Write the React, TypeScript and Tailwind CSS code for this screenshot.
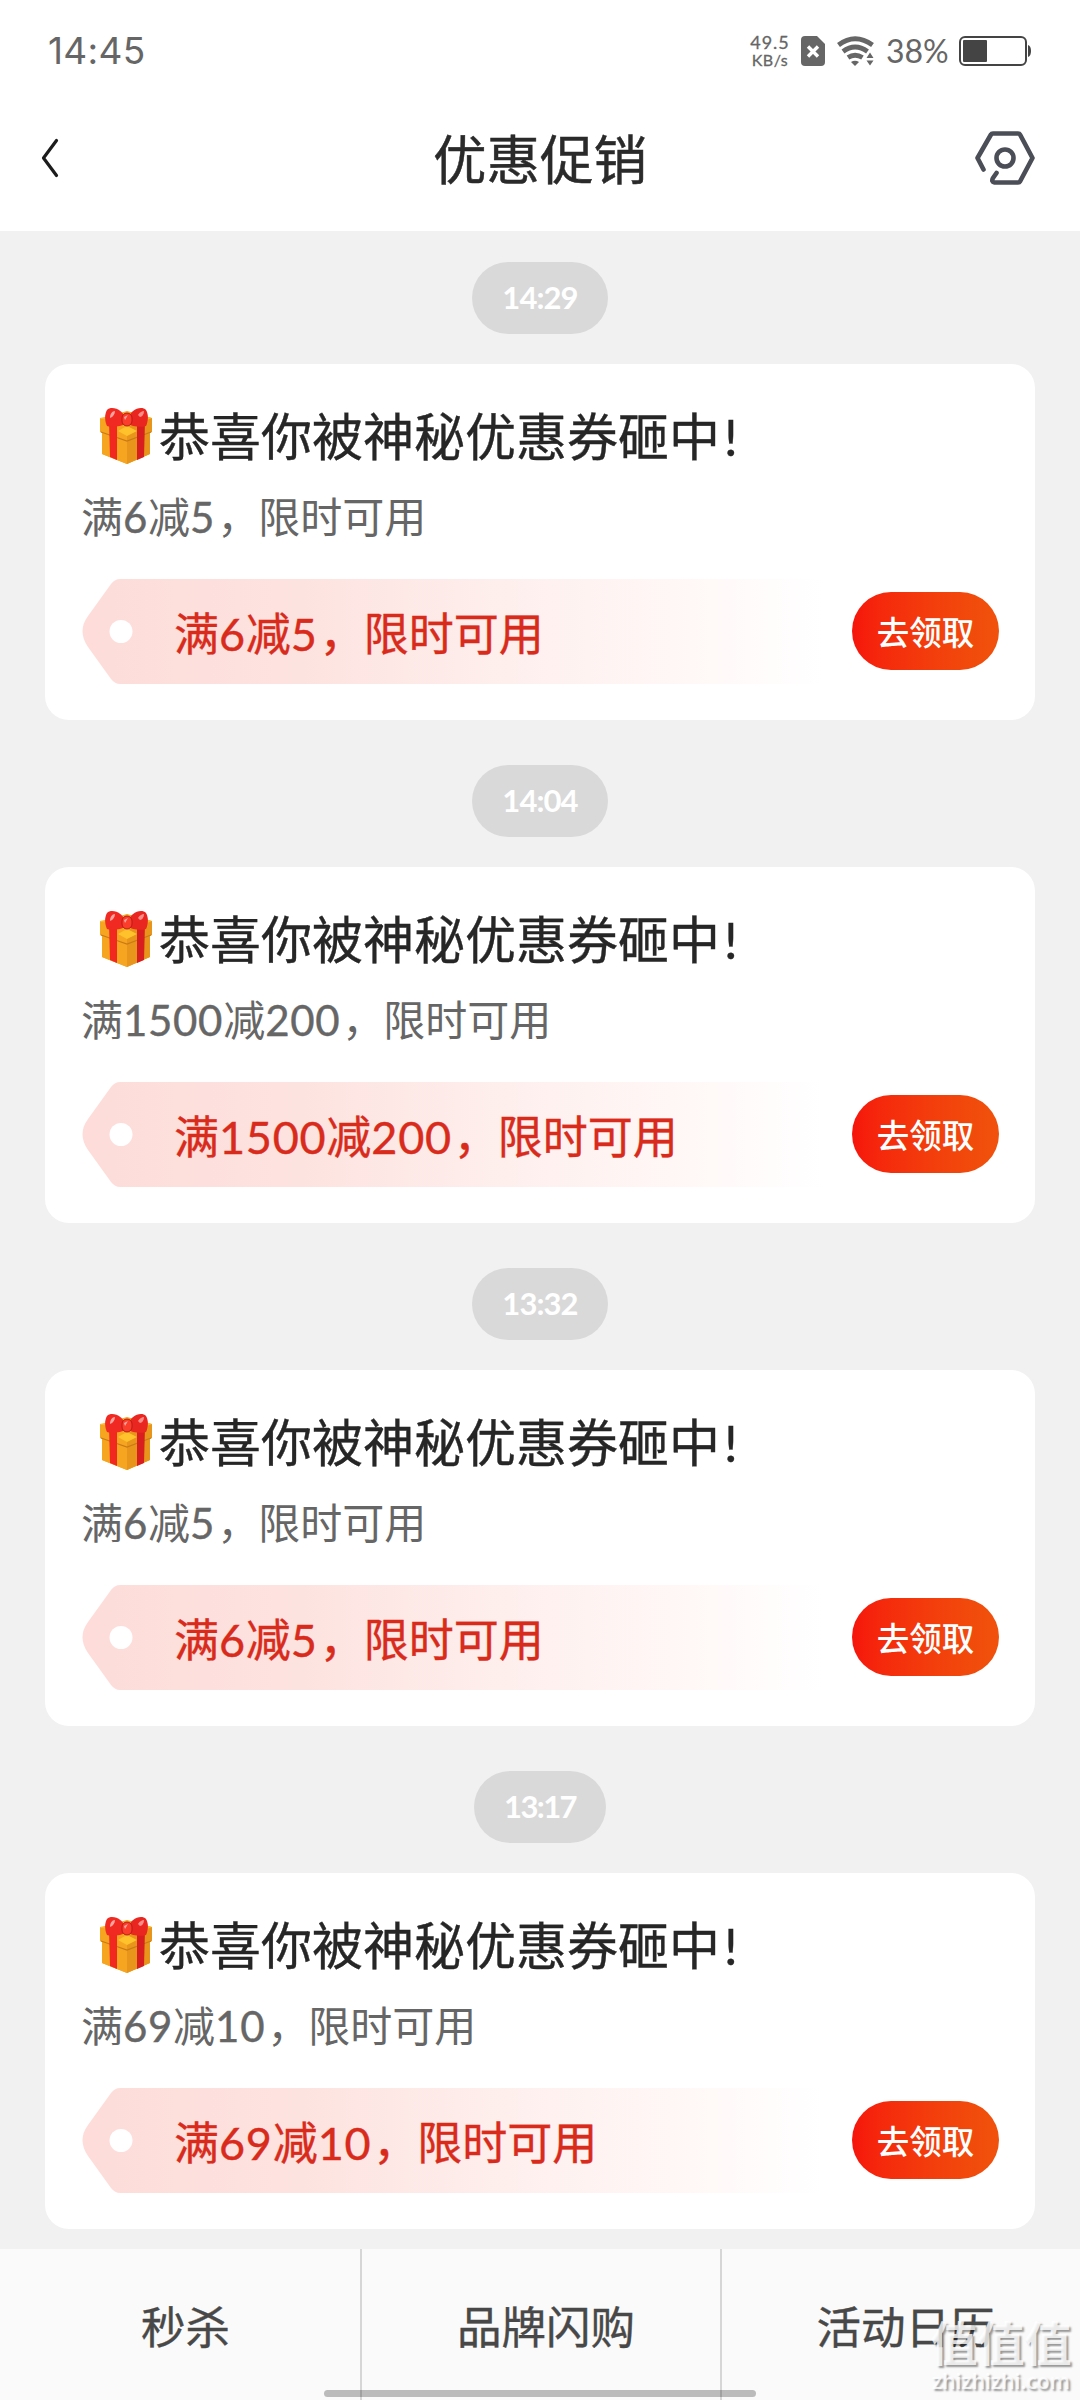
import React from "react";

type Coupon = { time: string; offer: string; narrow?: boolean };

const coupons: Coupon[] = [
  { time: "14:29", offer: "满6减5，限时可用" },
  { time: "14:04", offer: "满1500减200，限时可用" },
  { time: "13:32", offer: "满6减5，限时可用" },
  { time: "13:17", offer: "满69减10，限时可用", narrow: true },
];

/** Latin digits and the comma sit in their own spans so that each can be spaced apart from the Chinese text. */
function Offer({ text }: { text: string }) {
  return (
    <>
      {text.split(/(\d+|，)/).map((part, i) => {
        if (/^\d/.test(part)) {
          return (
            <span key={i} className="font-['Lato'] tracking-[0.016em] [-webkit-text-stroke:0.4px_currentColor]">
              {part}
            </span>
          );
        }
        if (part === "，") {
          return (
            <span key={i} className="-mr-px pl-[2px]">
              {part}
            </span>
          );
        }
        return <span key={i}>{part}</span>;
      })}
    </>
  );
}

function GiftIcon() {
  return (
    <svg viewBox="0 0 52 56" className="h-[56px] w-[52px] shrink-0">
      <path d="M0 11 L27 3 L52 10 L52 23 L50 24 L50 46 L27 56 L2 46 L2 24 L0 23Z" fill="#f2a01f" />
      <path d="M0 10 L27 19 L27 56 L2 46 L2 25 L0 24Z" fill="#f6a521" />
      <path d="M52 10 L27 19 L27 56 L50 46 L50 25 L52 24Z" fill="#e8961b" />
      <path d="M0 10 L27 4 L52 10 L27 19Z" fill="#fcb92a" />
      <path d="M1 24 L27 33 L51 24" fill="none" stroke="#c97a16" strokeWidth="1.2" />
      <path d="M9 12 L17 15 L17 52 L10 49Z" fill="#f0281f" />
      <path d="M45 12 L37 15 L37 52 L44 49Z" fill="#d81e1e" />
      <path d="M18 23 L27 18 L37 23 L27 28Z" fill="#ffc22c" />
      <path d="M26 12 C24 2 12 -3 7 2 C4 7 5 14 7 18 C13 20 21 18 26 16Z" fill="#f02a22" />
      <path d="M27 12 C30 2 41 -3 46 2 C49 7 48 14 46 18 C40 20 32 18 27 16Z" fill="#ea2620" />
      <rect x="22" y="5" width="10" height="13" rx="5" fill="#fb3d2c" stroke="#b51b18" strokeWidth="1" />
      <path d="M10 10 C10 6 12 3 15 3 C15 6 13 9 10 10Z" fill="#ffa5a0" />
      <path d="M38 7 C40 4 42 3 44 3 C44 6 42 9 40 9Z" fill="#ff8e88" />
      <path d="M24 9 L28 7 L25 12Z" fill="#ffa5a0" />
    </svg>
  );
}

function TagShape() {
  return (
    <svg viewBox="0 0 740 105" className="absolute inset-0 h-[105px] w-[740px]">
      <defs>
        <linearGradient id="tagFill" x1="0" x2="1" y1="0" y2="0">
          <stop offset="0" stopColor="#fddcd9" />
          <stop offset="0.3" stopColor="#fde3e0" />
          <stop offset="0.6" stopColor="#fef0ee" />
          <stop offset="0.85" stopColor="#fff9f8" />
          <stop offset="1" stopColor="#ffffff" />
        </linearGradient>
      </defs>
      <path
        d="M740 0 H38 Q33 0 29 5 L6 37 Q-5 52 6 68 L29 100 Q33 105 38 105 H740Z"
        fill="url(#tagFill)"
      />
      <circle cx="39" cy="52.5" r="11.5" fill="#fff" />
    </svg>
  );
}

function CouponCard({ offer }: { offer: string }) {
  return (
    <section className="mx-[45px] h-[356px] rounded-[24px] bg-white pl-[37px] pr-[36px] pt-[40px]">
      <div className="flex h-[64px] items-center pl-[18px]">
        <GiftIcon />
        <h2 className="-mt-px ml-[7px] whitespace-nowrap text-[51px] leading-[64px] text-[#262626] [-webkit-text-stroke:0.4px_currentColor]">
          恭喜你被神秘优惠券砸中<span className="ml-[4px] font-['Lato']">!</span>
        </h2>
      </div>
      <p className="-ml-px mt-[17px] h-[60px] whitespace-nowrap text-[42px] leading-[60px] text-[#666]">
        <Offer text={offer} />
      </p>
      <div className="mt-[34px] flex items-start justify-between">
        <div className="relative h-[105px] w-[740px]">
          <TagShape />
          <p className="relative pl-[92px] text-[45px] leading-[105px] text-[#d92b1c] [-webkit-text-stroke:0.4px_currentColor]">
            <Offer text={offer} />
          </p>
        </div>
        <button className="mt-[13px] h-[78px] w-[147px] rounded-full bg-linear-to-r from-[#f6140c] to-[#f0520c] text-[32.500px] font-medium leading-[76px] text-white">
          去领取
        </button>
      </div>
    </section>
  );
}

function StatusBar() {
  return (
    <div className="flex h-[102px] items-center justify-between pl-[48px] pr-[49px] text-[#666]">
      <span className="font-['Inter'] text-[37px] tracking-[0.3px]">14:45</span>
      <div className="flex items-center">
        <div className="w-[42px] text-center font-['Lato'] leading-[17px]">
          <div className="text-[18px] tracking-[1px] [-webkit-text-stroke:0.3px_currentColor]">49.5</div>
          <div className="text-[16px] tracking-[0.5px] [-webkit-text-stroke:0.3px_currentColor]">KB/s</div>
        </div>
        <svg viewBox="0 0 24 30" className="ml-[10px] h-[30px] w-[24px]">
          <path d="M4 0 H16 L24 8 V26 Q24 30 20 30 H4 Q0 30 0 26 V4 Q0 0 4 0Z" fill="#666" />
          <path d="M7 10.500 L17 20.500 M17 10.500 L7 20.500" stroke="#fff" strokeWidth="3.4" />
        </svg>
        <svg viewBox="0 0 37 30" className="ml-[12px] h-[30px] w-[37px]">
          <g fill="none" stroke="#666" strokeWidth="4.8">
            <path d="M1.500 9 Q18 -3.500 35.500 9" />
            <path d="M6 15.500 Q18 6.500 30.500 15.500" />
            <path d="M11 21.500 Q18 17 25.500 21.500" />
          </g>
          <path d="M14 26 Q18 23.500 22 26 L18 30Z" fill="#666" />
          <path d="M29.500 22 L33 16.500 L36.500 22Z M29.500 24.500 L33 29.500 L36.500 24.500Z" fill="#666" />
        </svg>
        <span className="ml-[12px] w-[63px] whitespace-nowrap font-['Lato'] text-[32px]">38%</span>
        <svg viewBox="0 0 72 30" className="ml-[10px] h-[30px] w-[72px]">
          <rect x="1" y="1" width="66" height="28" rx="5" fill="none" stroke="#444" strokeWidth="2" />
          <rect x="4" y="4" width="24" height="22" rx="1" fill="#444" />
          <path d="M69 9 Q72 10 72 15 Q72 20 69 21Z" fill="#444" />
        </svg>
      </div>
    </div>
  );
}

function TitleBar() {
  return (
    <div className="grid h-[129px] grid-cols-[1fr_auto_1fr] items-center pb-[18px] pl-[40px] pr-[45px]">
      <svg viewBox="0 0 20 42" className="h-[42px] w-[20px]">
        <path
          d="M16.500 3.500 L3.500 21 L16.500 38.500"
          fill="none"
          stroke="#1c1c1c"
          strokeWidth="3.2"
          strokeLinecap="round"
          strokeLinejoin="round"
        />
      </svg>
      <h1 className="-mt-px pl-[5px] text-[53.500px] leading-[64px] text-[#2a2a2a] [-webkit-text-stroke:0.5px_currentColor]">优惠促销</h1>
      <svg viewBox="0 0 60 54" className="h-[54px] w-[60px] justify-self-end">
        <g fill="none" stroke="#4b4d57" strokeWidth="4.6" strokeLinecap="round" strokeLinejoin="round">
          <path d="M8.500 38.500 L2.500 27 L16 3.500 Q16.500 2.500 18 2.500 H43 Q44.500 2.500 45 3.500 L57.500 27 L45 50.500 Q44.500 51.500 43 51.500 H19.500 Q16 51 18 47 L21.500 42" />
          <circle cx="30" cy="27" r="8.500" />
        </g>
      </svg>
    </div>
  );
}

export default function App() {
  return (
    <div className="relative flex h-[2400px] w-[1080px] flex-col overflow-hidden bg-[#f1f1f1] font-['Noto_Sans_CJK_SC',sans-serif]">
      <header className="h-[231px] shrink-0 bg-white">
        <StatusBar />
        <TitleBar />
      </header>
      <main className="h-[2018px] shrink-0 pt-[31px]">
        {coupons.map((c) => (
          <div key={c.time} className="mb-[45px]">
            <div className="mb-[30px] flex justify-center">
              <time
                className={`h-[72px] rounded-full bg-[#d9d9d9] text-center font-['Lato'] text-[31px] font-bold leading-[70px] text-white ${
                  c.narrow ? "w-[132px] tracking-[-1.600px]" : "w-[136px] tracking-[-0.900px]"
                }`}
              >
                {c.time}
              </time>
            </div>
            <CouponCard offer={c.offer} />
          </div>
        ))}
      </main>
      <nav className="grid flex-1 grid-cols-[362px_360px_358px] bg-[#fafafa] text-[44.500px] leading-[64px] text-[#484848] [-webkit-text-stroke:0.4px_currentColor]">
        <span className="border-r-2 border-[#d6d6d6] pl-[11px] pt-[44px] text-center">秒杀</span>
        <span className="border-r-2 border-[#d6d6d6] pl-[10px] pt-[44px] text-center">品牌闪购</span>
        <span className="pl-[9px] pt-[44px] text-center">活动日历</span>
      </nav>
      <div className="absolute bottom-[3px] left-[324px] h-[7px] w-[432px] rounded-full bg-black/25" />
      <div className="absolute bottom-[6px] right-[8px] w-[142px] text-center text-white/80 [text-shadow:2px_2px_2px_rgba(0,0,0,0.4)]">
        <div className="text-[47px] font-bold leading-[54px]">值值值</div>
        <div className="font-['Open_Sans'] text-[21.200px] font-semibold leading-[26px]">zhizhizhi.com</div>
      </div>
    </div>
  );
}
